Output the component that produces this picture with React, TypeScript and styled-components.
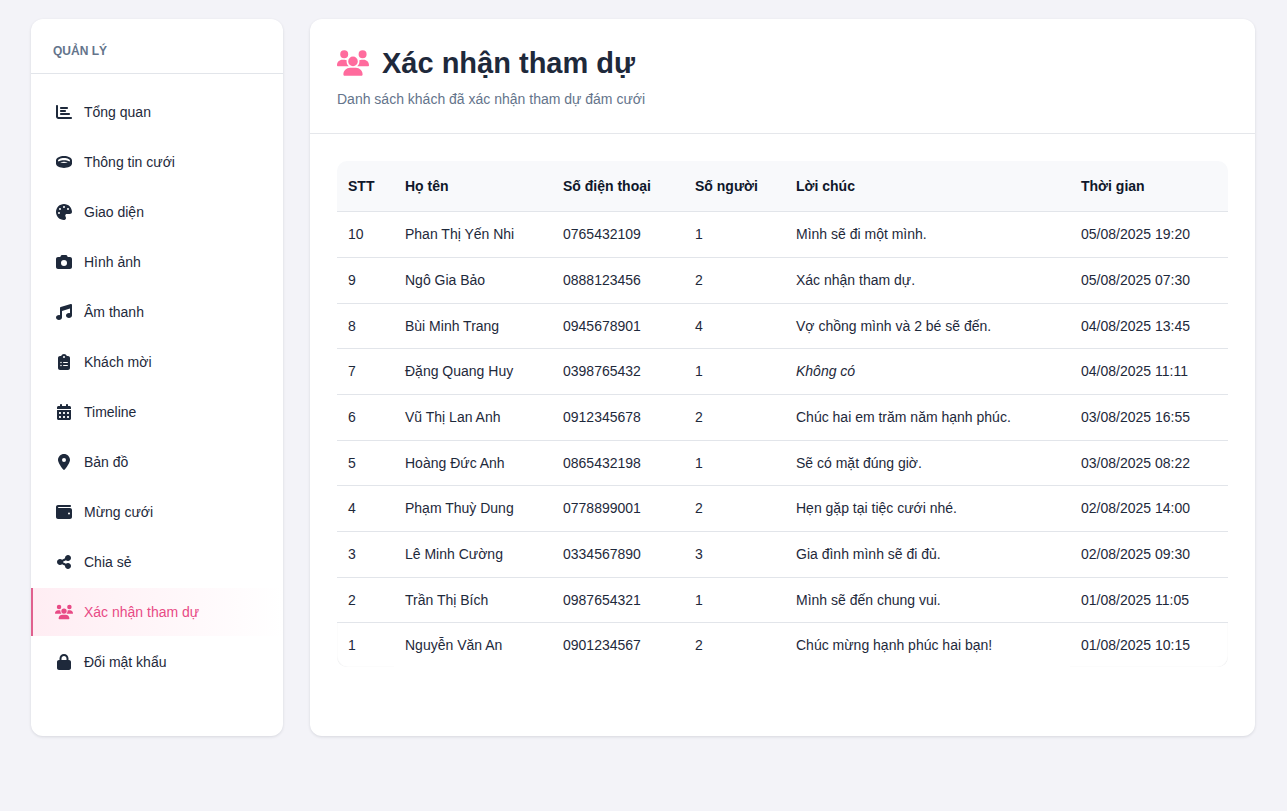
import React from 'react';
import styled, { createGlobalStyle } from 'styled-components';
import type { IconType } from 'react-icons';
import {
  FaCalendarDays,
  FaCamera,
  FaChartBar,
  FaClipboardList,
  FaLocationDot,
  FaLock,
  FaMusic,
  FaPalette,
  FaRing,
  FaShareNodes,
  FaUsers,
  FaWallet,
} from 'react-icons/fa6';

const GlobalStyle = createGlobalStyle`
  *, *::before, *::after { box-sizing: border-box; }
  body {
    margin: 0;
    min-height: 100vh;
    background: #f3f3f8;
    color: #1e293b;
    font-family: "Liberation Sans", Arial, sans-serif;
    font-size: 14px;
    line-height: 21px;
  }
`;

const Page = styled.div`
  display: grid;
  grid-template-columns: 252px minmax(0, 1fr);
  gap: 27px;
  padding: 19px 32px 32px 31px;
`;

const Card = styled.section`
  background: #fff;
  border-radius: 12px;
  box-shadow: 0 1px 3px rgba(15, 23, 42, 0.12);
  overflow: hidden;
`;

const SidebarTitle = styled.h2`
  margin: 0;
  padding: 22px 22px 11px;
  border-bottom: 1px solid #e2e5ea;
  color: #64748b;
  font-size: 12px;
  font-weight: 700;
  line-height: 21px;
  text-transform: uppercase;
`;

const NavList = styled.ul`
  display: flex;
  flex-direction: column;
  gap: 2px;
  margin: 0;
  padding: 14px 0;
  list-style: none;
`;

const NavLink = styled.a<{ $active: boolean }>`
  display: flex;
  align-items: center;
  gap: 11px;
  height: 48px;
  padding: 0 22px;
  border-left: 2px solid ${({ $active }) => ($active ? '#e0608e' : 'transparent')};
  background: ${({ $active }) =>
    $active ? 'linear-gradient(90deg, #ffedf3, #ffffff)' : 'none'};
  color: ${({ $active }) => ($active ? '#e84a85' : '#1e293b')};
  text-decoration: none;

  svg {
    flex: none;
    width: 18px;
    height: 16px;
  }
`;

const PageHeader = styled.header`
  padding: 24px 27px;
  border-bottom: 1px solid #e5e7eb;
`;

const Title = styled.h1`
  display: flex;
  align-items: center;
  gap: 13px;
  margin: 0;
  font-size: 29px;
  font-weight: 700;
  line-height: 40px;

  svg {
    flex: none;
    width: 32px;
    height: 26px;
    color: #ff6b9d;
  }
`;

const Subtitle = styled.p`
  margin: 6px 0 0;
  color: #64748b;
  line-height: 20px;
`;

const PageBody = styled.div`
  padding: 27px 27px 68px;
`;

const TableFrame = styled.div`
  border-radius: 10px;
  overflow: hidden;
`;

const Table = styled.table`
  width: 100%;
  table-layout: fixed;
  border-collapse: separate;
  border-spacing: 0;
  text-align: left;

  tbody tr:nth-child(3n) td {
    line-height: 20px;
  }

  tbody tr:last-child td {
    padding-bottom: 11px;
    border-bottom-color: transparent;
  }

  tbody tr:last-child td:first-child {
    border-bottom-left-radius: 10px;
    box-shadow: inset 1px -1px 1px -1px rgba(15, 23, 42, 0.12);
  }

  tbody tr:last-child td:last-child {
    border-bottom-right-radius: 10px;
    box-shadow: inset -1px -1px 1px -1px rgba(15, 23, 42, 0.12);
  }
`;

const Column = styled.col<{ $width?: number }>`
  width: ${({ $width }) => ($width ? `${$width}px` : 'auto')};
`;

const HeadCell = styled.th`
  padding: 15px 11px 14px;
  border-bottom: 1px solid #e2e5ea;
  background: #f8f9fb;
  color: #0f172a;
  font-weight: 700;
`;

const Cell = styled.td`
  padding: 12px 11px;
  border-bottom: 1px solid #e2e5ea;
`;

const navItems: { label: string; icon: IconType; active?: boolean }[] = [
  { label: 'Tổng quan', icon: FaChartBar },
  { label: 'Thông tin cưới', icon: FaRing },
  { label: 'Giao diện', icon: FaPalette },
  { label: 'Hình ảnh', icon: FaCamera },
  { label: 'Âm thanh', icon: FaMusic },
  { label: 'Khách mời', icon: FaClipboardList },
  { label: 'Timeline', icon: FaCalendarDays },
  { label: 'Bản đồ', icon: FaLocationDot },
  { label: 'Mừng cưới', icon: FaWallet },
  { label: 'Chia sẻ', icon: FaShareNodes },
  { label: 'Xác nhận tham dự', icon: FaUsers, active: true },
  { label: 'Đổi mật khẩu', icon: FaLock },
];

const columns: { label: string; width?: number }[] = [
  { label: 'STT', width: 57 },
  { label: 'Họ tên', width: 158 },
  { label: 'Số điện thoại', width: 132 },
  { label: 'Số người', width: 101 },
  { label: 'Lời chúc' },
  { label: 'Thời gian', width: 158 },
];

interface Guest {
  id: number;
  name: string;
  phone: string;
  people: number;
  wish?: string;
  time: string;
}

const guests: Guest[] = [
  { id: 10, name: 'Phan Thị Yến Nhi', phone: '0765432109', people: 1, wish: 'Mình sẽ đi một mình.', time: '05/08/2025 19:20' },
  { id: 9, name: 'Ngô Gia Bảo', phone: '0888123456', people: 2, wish: 'Xác nhận tham dự.', time: '05/08/2025 07:30' },
  { id: 8, name: 'Bùi Minh Trang', phone: '0945678901', people: 4, wish: 'Vợ chồng mình và 2 bé sẽ đến.', time: '04/08/2025 13:45' },
  { id: 7, name: 'Đặng Quang Huy', phone: '0398765432', people: 1, time: '04/08/2025 11:11' },
  { id: 6, name: 'Vũ Thị Lan Anh', phone: '0912345678', people: 2, wish: 'Chúc hai em trăm năm hạnh phúc.', time: '03/08/2025 16:55' },
  { id: 5, name: 'Hoàng Đức Anh', phone: '0865432198', people: 1, wish: 'Sẽ có mặt đúng giờ.', time: '03/08/2025 08:22' },
  { id: 4, name: 'Phạm Thuỳ Dung', phone: '0778899001', people: 2, wish: 'Hẹn gặp tại tiệc cưới nhé.', time: '02/08/2025 14:00' },
  { id: 3, name: 'Lê Minh Cường', phone: '0334567890', people: 3, wish: 'Gia đình mình sẽ đi đủ.', time: '02/08/2025 09:30' },
  { id: 2, name: 'Trần Thị Bích', phone: '0987654321', people: 1, wish: 'Mình sẽ đến chung vui.', time: '01/08/2025 11:05' },
  { id: 1, name: 'Nguyễn Văn An', phone: '0901234567', people: 2, wish: 'Chúc mừng hạnh phúc hai bạn!', time: '01/08/2025 10:15' },
];

export default function App() {
  return (
    <>
      <GlobalStyle />
      <Page>
        <Card as="aside">
          <SidebarTitle>Quản lý</SidebarTitle>
          <nav>
            <NavList>
              {navItems.map(({ label, icon: Icon, active = false }) => (
                <li key={label}>
                  <NavLink href="#" $active={active} aria-current={active ? 'page' : undefined}>
                    <Icon aria-hidden />
                    {label}
                  </NavLink>
                </li>
              ))}
            </NavList>
          </nav>
        </Card>
        <Card as="main">
          <PageHeader>
            <Title>
              <FaUsers aria-hidden />
              Xác nhận tham dự
            </Title>
            <Subtitle>Danh sách khách đã xác nhận tham dự đám cưới</Subtitle>
          </PageHeader>
          <PageBody>
            <TableFrame>
              <Table>
                <colgroup>
                  {columns.map(({ label, width }) => (
                    <Column key={label} $width={width} />
                  ))}
                </colgroup>
                <thead>
                  <tr>
                    {columns.map(({ label }) => (
                      <HeadCell key={label} scope="col">{label}</HeadCell>
                    ))}
                  </tr>
                </thead>
                <tbody>
                  {guests.map((guest) => (
                    <tr key={guest.id}>
                      <Cell>{guest.id}</Cell>
                      <Cell>{guest.name}</Cell>
                      <Cell>{guest.phone}</Cell>
                      <Cell>{guest.people}</Cell>
                      <Cell>{guest.wish ?? <em>Không có</em>}</Cell>
                      <Cell>{guest.time}</Cell>
                    </tr>
                  ))}
                </tbody>
              </Table>
            </TableFrame>
          </PageBody>
        </Card>
      </Page>
    </>
  );
}
